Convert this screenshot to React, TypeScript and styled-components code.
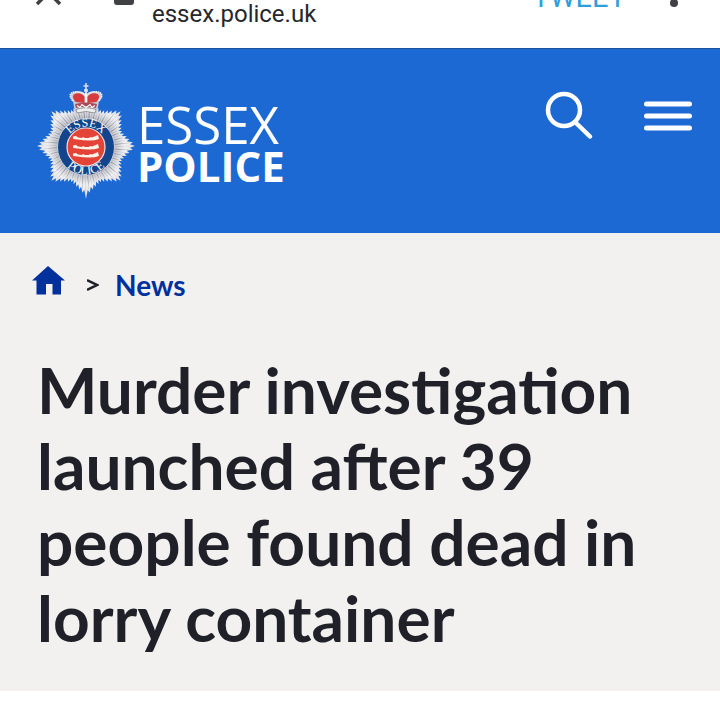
import React from 'react';
import styled, { createGlobalStyle } from 'styled-components';

const GlobalStyle = createGlobalStyle`
  * { box-sizing: border-box; }
  body { margin: 0; background: #fff; font-family: Lato, "Open Sans", sans-serif; }
`;

const BrowserBar = styled.div`
  display: flex;
  align-items: flex-end;
  height: 48px;
  padding: 0 40px 0 32px;
  overflow: hidden;
  background: #fff;
  font-family: Roboto, sans-serif;
  font-size: 24px;
`;

const BarButton = styled.button`
  display: block;
  flex: none;
  margin: 0 0 42px;
  padding: 0;
  border: 0;
  background: none;
  color: #404144;
  font: inherit;
  line-height: 0;
`;

const LockIcon = styled.svg`
  flex: none;
  margin: 0 18px 43px 50px;
`;

const Address = styled.span`
  flex: 1;
  margin-bottom: 20px;
  line-height: 28px;
  color: #26272b;
`;

const TweetButton = styled(BarButton)`
  margin: 0 42px 37px 0;
  color: #2f9fdc;
  font-size: 29px;
  line-height: 28px;
`;

const Header = styled.header`
  display: flex;
  align-items: flex-start;
  padding: 32px 28px 32px 33px;
  border-top: 1px solid #1c559f;
  background: #1d69d3;
`;

const Brand = styled.a`
  display: flex;
  align-items: flex-start;
  color: #fff;
  text-decoration: none;
`;

const Wordmark = styled.span`
  display: flex;
  flex-direction: column;
  padding-top: 19px;
  font-family: "Open Sans", sans-serif;
`;

const WordLight = styled.span`
  font-size: 51px;
  font-weight: 400;
  line-height: 48px;
`;

const WordBold = styled.span`
  font-size: 42px;
  font-weight: 700;
  line-height: 36px;
`;

const Actions = styled.div`
  display: flex;
  gap: 48px;
  margin-left: auto;
  padding-top: 8px;
`;

const IconButton = styled.button`
  padding: 0;
  border: 0;
  background: none;
  color: #fff;
  line-height: 0;
`;

const Article = styled.main`
  padding: 32px 32px 35px;
  background: #f3f1f0;
`;

const Breadcrumb = styled.nav`
  display: flex;
  align-items: center;
  height: 40px;
  font-size: 28px;
  font-weight: 700;
  line-height: 40px;
`;

const CrumbLink = styled.a`
  display: flex;
  color: #00309c;
  text-decoration: none;
`;

const Separator = styled.svg`
  margin: 0 16px 0 22px;
`;

const Title = styled.h1`
  margin: 47px 0 0;
  padding-left: 5px;
  color: #1f2028;
  font-size: 64px;
  font-weight: 700;
  line-height: 76px;
`;

const CX = 61;
const CY = 71;

// Length of each ray of the star, longest on the eight main points.
const RAYS = 80;
const rayLength = (i: number) => {
  const step = i % 10;
  const fromTip = Math.min(step, 10 - step);
  return [49, 47, 44, 42, 40, 39][fromTip] + (i === 40 ? 4 : 0);
};
const polar = (r: number, turn: number) => {
  const a = turn * Math.PI * 2 - Math.PI / 2;
  return `${(CX + r * Math.cos(a)).toFixed(2)},${(CY + r * Math.sin(a)).toFixed(2)}`;
};
const starOutline = Array.from({ length: RAYS }, (_, i) => {
  const notch = Math.min(rayLength(i), rayLength((i + 1) % RAYS)) - 3;
  return `${polar(rayLength(i), i / RAYS)} ${polar(notch, (i + 0.5) / RAYS)}`;
}).join(' ');

const Crest = () => (
  <svg width="104" height="120" viewBox="8 6 104 120" role="img" aria-label="Essex Police crest">
    <defs>
      <radialGradient id="silver" gradientUnits="userSpaceOnUse" cx={CX} cy={CY} r="52">
        <stop offset="0.55" stopColor="#c4c6cd" />
        <stop offset="0.75" stopColor="#f0f0f2" />
        <stop offset="1" stopColor="#d5d7dc" />
      </radialGradient>
      <path id="arcTop" d={`M${CX - 20.5},${CY + 1} a20.5,20.5 0 0 1 41,0`} />
      <path id="arcBottom" d={`M${CX - 27.5},${CY + 1} a27.5,27.5 0 0 0 55,0`} />
    </defs>
    <polygon points={starOutline} fill="url(#silver)" />
    {Array.from({ length: RAYS }, (_, i) => (
      <polygon
        key={i}
        points={`${polar(28, (i + 0.1) / RAYS)} ${polar(rayLength(i) - 2, (i + 0.1) / RAYS)} ${polar(28, (i + 0.6) / RAYS)}`}
        fill="#555b6b"
        opacity={i % 2 ? 0.55 : 0.2}
      />
    ))}
    <g>
      <path d="M50 38 L48 26 Q42 19 49 17 Q56 15 61 19 Q66 15 73 17 Q80 19 74 26 L72 38 Q61 34 50 38z" fill="#c9ccd6" />
      <path d="M50.500 27 Q45 20 51 18.500 Q57 17.500 59.500 22 L59.500 28z M71.500 27 Q77 20 71 18.500 Q65 17.500 62.500 22 L62.500 28z" fill="#d73b3d" />
      <path d="M48 26 Q42 19 49 17 Q57 16 61 21 Q65 16 73 17 Q80 19 74 26" fill="none" stroke="#f0f1f5" strokeWidth="1.600" strokeDasharray="1.500 .6" />
      <path d="M61 17v12" stroke="#fff" strokeWidth="1.600" />
      <path d="M50 29 Q61 26 72 29 L71 33 Q61 30 51 33z" fill="#a8485a" />
      <path d="M51 34.500 Q61 31 71 34.500 L70 38 Q61 35 52 38z" fill="#eee" stroke="#7a7884" strokeWidth=".7" />
      <path d="M52 30.500l3 2 2-3 4 3 4-3 2 3 3-2" stroke="#fff" strokeWidth="1.100" fill="none" />
      <circle cx="61" cy="15.500" r="2" fill="#dfe2ea" />
      <path d="M61 8v7M58.500 11h5" stroke="#dfe2ea" strokeWidth="1.500" />
    </g>
    <circle cx={CX} cy={CY + 1} r="28.500" fill="#12458c" stroke="#c9cdd6" strokeWidth="1" />
    <circle cx={CX} cy={CY + 1} r="19" fill="#e44437" stroke="#f6dfdf" strokeWidth="1.200" />
    <g fill="#fff" fontFamily="Liberation Serif, serif" fontSize="12" textAnchor="middle">
      <text><textPath href="#arcTop" startOffset="50%">ESSEX</textPath></text>
      <text><textPath href="#arcBottom" startOffset="50%">POLICE</textPath></text>
    </g>
    {[63, 72, 80].map((y) => (
      <path
        key={y}
        d={`M48 ${y - 1.5} L51 ${y - 2} L53 ${y - 0.5} L57 ${y} L58 ${y - 1} L60 ${y} L64 ${y} L65 ${y - 1} L67 ${y - 0.5} L73 ${y - 3} L74 ${y + 1} Q70 ${y + 2.5} 64 ${y + 2.5} Q58 ${y + 2.5} 53 ${y + 1.5} L48 ${y + 1}z`}
        fill="#fff3e9"
      />
    ))}
  </svg>
);

export default function App() {
  return (
    <>
      <GlobalStyle />
      <BrowserBar>
        <BarButton aria-label="Close">
          <svg width="32" height="32" viewBox="0 0 32 32" fill="none" stroke="currentColor" strokeWidth="3.500">
            <path d="M5 7l23 23M28 7L5 30" />
          </svg>
        </BarButton>
        <LockIcon width="20" height="28" viewBox="0 0 20 28" fill="#404144">
          <rect y="10" width="20" height="18" rx="3" />
          <path d="M5 11V7a5 5 0 0 1 10 0v4" fill="none" stroke="#404144" strokeWidth="2" />
        </LockIcon>
        <Address>essex.police.uk</Address>
        <TweetButton>TWEET</TweetButton>
        <BarButton aria-label="More options">
          <svg width="12" height="34" viewBox="0 0 12 34" overflow="visible" fill="currentColor">
            <circle cx="6" cy="7" r="4" />
            <circle cx="6" cy="19" r="4" />
            <circle cx="6" cy="31" r="4" />
          </svg>
        </BarButton>
      </BrowserBar>
      <Header>
        <Brand href="#" aria-label="Essex Police">
          <Crest />
          <Wordmark>
            <WordLight>ESSEX</WordLight>
            <WordBold>POLICE</WordBold>
          </Wordmark>
        </Brand>
        <Actions>
          <IconButton aria-label="Search">
            <svg width="52" height="52" viewBox="0 0 52 52" fill="none" stroke="currentColor" strokeLinecap="round">
              <circle cx="20" cy="21" r="16" strokeWidth="4.500" />
              <path d="M31 33L46 47.500" strokeWidth="4.500" />
            </svg>
          </IconButton>
          <IconButton aria-label="Menu">
            <svg width="48" height="52" viewBox="0 0 48 52" stroke="currentColor" strokeWidth="5" strokeLinecap="round">
              <path d="M2.500 15h43M2.500 27h43M2.500 39h43" />
            </svg>
          </IconButton>
        </Actions>
      </Header>
      <Article>
        <Breadcrumb aria-label="Breadcrumb">
          <CrumbLink href="#" aria-label="Home">
            <svg width="33" height="40" viewBox="0 0 33 40" fill="currentColor">
              <path d="M16 1L33 15.500H29V29.500H20.500V19H14V29.500H4.500V15.500H0z" />
            </svg>
          </CrumbLink>
          <Separator width="12" height="14" viewBox="0 0 12 14" fill="none" stroke="#1f2028" strokeWidth="2.500">
            <path d="M0 2L10 7L0 12" />
          </Separator>
          <CrumbLink href="#">News</CrumbLink>
        </Breadcrumb>
        <Title>Murder investigation launched after 39 people found dead in lorry container</Title>
      </Article>
    </>
  );
}
